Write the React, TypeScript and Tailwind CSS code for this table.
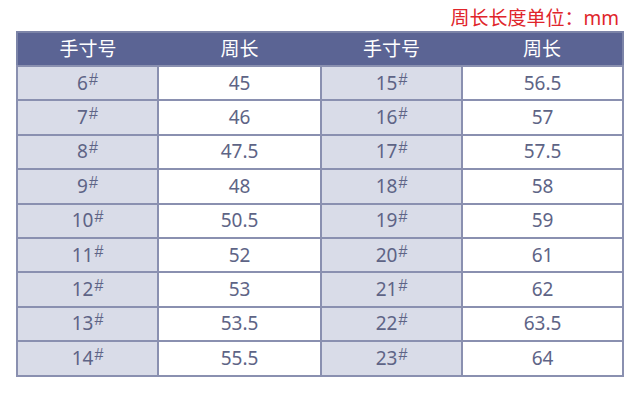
const rows: [string, string, string, string][] = [
  ["6", "45", "15", "56.5"],
  ["7", "46", "16", "57"],
  ["8", "47.5", "17", "57.5"],
  ["9", "48", "18", "58"],
  ["10", "50.5", "19", "59"],
  ["11", "52", "20", "61"],
  ["12", "53", "21", "62"],
  ["13", "53.5", "22", "63.5"],
  ["14", "55.5", "23", "64"],
];

function Size({ n }: { n: string }) {
  return (
    <span>
      {n}
      <sup
        className="text-[16px] relative -top-[5px] ml-[1px]"
        style={{ fontFamily: '"Liberation Sans", sans-serif' }}
      >
        #
      </sup>
    </span>
  );
}

export default function App() {
  return (
    <div
      className="w-[640px] h-[410px] bg-white pt-[5px]"
      style={{ fontFamily: '"Noto Sans", "Noto Sans CJK SC", sans-serif' }}
    >
      <div className="flex justify-end pr-[21px] h-[26px] text-[19px] leading-[26px] text-[#e0252b]">
        周长长度单位：mm
      </div>
      <table className="ml-[16px] w-[606px] border-collapse border-2 border-[#7c84a8] text-[#5e6486] text-[19px] table-fixed">
        <colgroup>
          <col className="w-[141px]" />
          <col className="w-[163px]" />
          <col className="w-[141px]" />
          <col className="w-[161px]" />
        </colgroup>
        <thead>
          <tr className="h-[34px] bg-[#5b6494] text-white text-[19px]">
            <th className="font-normal">手寸号</th>
            <th className="font-normal">周长</th>
            <th className="font-normal">手寸号</th>
            <th className="font-normal">周长</th>
          </tr>
        </thead>
        <tbody>
          {rows.map((r) => (
            <tr key={r[0]} className="h-[34.4px] leading-none">
              <td className="bg-[#d9dce8] border-2 border-[#8a90b0] text-center p-0">
                <Size n={r[0]} />
              </td>
              <td className="bg-white border-2 border-[#8a90b0] text-center p-0">{r[1]}</td>
              <td className="bg-[#d9dce8] border-2 border-[#8a90b0] text-center p-0">
                <Size n={r[2]} />
              </td>
              <td className="bg-white border-2 border-[#8a90b0] text-center p-0">{r[3]}</td>
            </tr>
          ))}
        </tbody>
      </table>
    </div>
  );
}
